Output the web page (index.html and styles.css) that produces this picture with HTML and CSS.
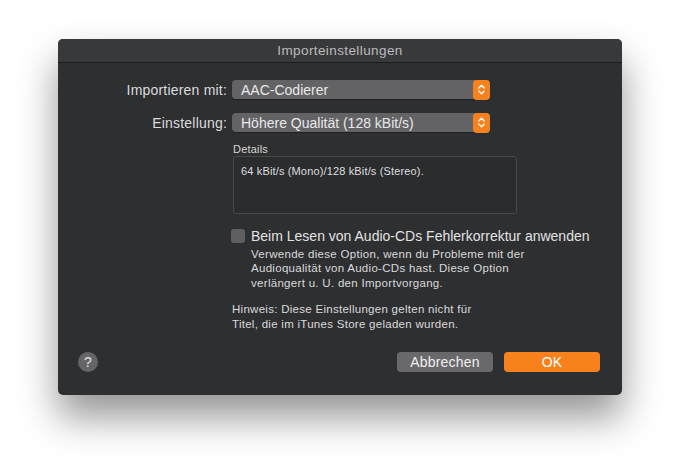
FILE: index.html
```html
<!DOCTYPE html>
<html lang="de">
<head>
<meta charset="utf-8">
<title>Importeinstellungen</title>
<link rel="stylesheet" href="styles.css">
</head>
<body>
<div class="window">
  <div class="titlebar">Importeinstellungen</div>
  <div class="content">
    <div class="row first">
      <label class="label">Importieren mit:</label>
      <div class="popup">
        <span class="popup-text">AAC-Codierer</span>
        <span class="stepper"><svg width="9" height="13" viewBox="0 0 9 13"><path d="M1.8 5 L4.5 2.3 L7.2 5 M1.8 8 L4.5 10.7 L7.2 8" fill="none" stroke="#fff" stroke-width="1.3" stroke-linecap="round" stroke-linejoin="round"/></svg></span>
      </div>
    </div>
    <div class="row second">
      <label class="label">Einstellung:</label>
      <div class="popup">
        <span class="popup-text">Höhere Qualität (128 kBit/s)</span>
        <span class="stepper"><svg width="9" height="13" viewBox="0 0 9 13"><path d="M1.8 5 L4.5 2.3 L7.2 5 M1.8 8 L4.5 10.7 L7.2 8" fill="none" stroke="#fff" stroke-width="1.3" stroke-linecap="round" stroke-linejoin="round"/></svg></span>
      </div>
    </div>
    <div class="details">
      <div class="details-label">Details</div>
      <div class="details-box">64 kBit/s (Mono)/128 kBit/s (Stereo).</div>
    </div>
    <div class="check">
      <span class="checkbox"></span>
      <div class="check-body">
        <div class="check-title">Beim Lesen von Audio-CDs Fehlerkorrektur anwenden</div>
        <div class="check-desc">Verwende diese Option, wenn du Probleme mit der<br>Audioqualität von Audio-CDs hast. Diese Option<br>verlängert u. U. den Importvorgang.</div>
      </div>
    </div>
    <div class="note">Hinweis: Diese Einstellungen gelten nicht für<br>Titel, die im iTunes Store geladen wurden.</div>
    <div class="footer">
      <span class="help">?</span>
      <div class="buttons">
        <span class="btn cancel">Abbrechen</span>
        <span class="btn ok">OK</span>
      </div>
    </div>
  </div>
</div>
</body>
</html>
```

FILE: styles.css
```css
html, body {
  margin: 0;
  padding: 0;
  background: #ffffff;
}
body {
  padding-top: 39px;
  padding-left: 58px;
  height: 472px;
  box-sizing: border-box;
  font-family: "Liberation Sans", Arial, sans-serif;
  color: #dedede;
}
.window {
  position: relative;
  width: 564px;
  height: 356px;
  background: #2e2f31;
  border-radius: 5px;
  box-shadow: 0 22px 38px rgba(0, 0, 0, 0.42);
}
.window::before {
  content: "";
  position: absolute;
  left: 8px;
  right: 8px;
  top: 40px;
  bottom: -14px;
  background: rgba(0, 0, 0, 0.5);
  filter: blur(20px);
  z-index: -1;
}
.titlebar {
  height: 23px;
  line-height: 23px;
  text-align: center;
  background: #38393b;
  border-bottom: 1px solid #1c1d1e;
  border-radius: 5px 5px 0 0;
  font-size: 13.5px;
  color: #bcbcbc;
  letter-spacing: 0.4px;
}
.content {
  display: flex;
  flex-direction: column;
}
.row {
  display: flex;
  align-items: center;
  height: 19px;
}
.row.first { margin-top: 17px; }
.row.second { margin-top: 14px; }
.label {
  width: 169px;
  margin-right: 5px;
  text-align: right;
  font-size: 14px;
  letter-spacing: 0.2px;
  color: #dcdcdc;
}
.popup {
  width: 258px;
  height: 19px;
  display: flex;
  align-items: center;
  background: #636365;
  border-radius: 4px;
  box-shadow: 0 1px 1px rgba(0,0,0,0.3);
}
.popup-text {
  flex: 1;
  padding-left: 9px;
  font-size: 14px;
  color: #e8e8e8;
}
.stepper {
  width: 17px;
  height: 20px;
  background: #f5821f;
  border-radius: 4px;
  display: flex;
  align-items: center;
  justify-content: center;
}
.details {
  margin-left: 175px;
  margin-top: 11px;
}
.details-label {
  font-size: 11px;
  line-height: 13px;
  color: #d6d6d6;
  letter-spacing: 0.2px;
}
.details-box {
  width: 284px;
  height: 58px;
  box-sizing: border-box;
  border: 1px solid #47484a;
  border-radius: 3px;
  background: #2b2c2e;
  padding: 8px 7px;
  font-size: 11px;
  line-height: 13px;
  letter-spacing: 0.15px;
  color: #dedede;
}
.check {
  display: flex;
  margin-top: 14px;
  margin-left: 173px;
}
.checkbox {
  width: 14px;
  height: 14px;
  border-radius: 3px;
  background: #5f5f61;
  margin-top: 1px;
  margin-right: 6px;
  flex: none;
}
.check-title {
  font-size: 14px;
  line-height: 16px;
  color: #e2e2e2;
}
.check-desc {
  margin-top: 3px;
  font-size: 11.5px;
  line-height: 14.4px;
  letter-spacing: 0.3px;
  color: #dadada;
}
.note {
  margin-left: 174px;
  margin-top: 12px;
  font-size: 11.5px;
  line-height: 14.5px;
  letter-spacing: 0.28px;
  color: #dadada;
}
.footer {
  display: flex;
  align-items: center;
  justify-content: space-between;
  margin-top: 21px;
  padding: 0 22px 0 20px;
}
.help {
  width: 20px;
  height: 20px;
  border-radius: 50%;
  background: #656567;
  color: #e6e6e6;
  font-size: 14px;
  line-height: 20px;
  text-align: center;
}
.buttons {
  display: flex;
  gap: 11px;
}
.btn {
  width: 96px;
  height: 20px;
  line-height: 20px;
  border-radius: 4px;
  text-align: center;
  font-size: 14px;
  letter-spacing: 0.2px;
  color: #f0f0f0;
}
.cancel {
  background: #69696b;
}
.ok {
  background: #f7821b;
  color: #ffffff;
}
```
